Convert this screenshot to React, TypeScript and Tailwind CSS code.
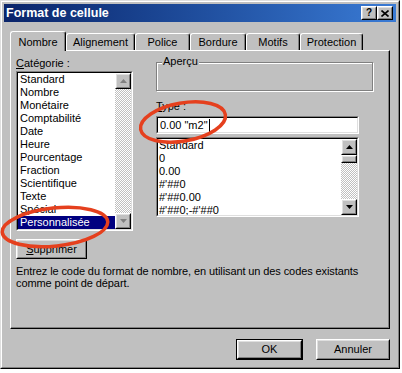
import type { ReactNode } from "react";

const FONT = { fontFamily: '"Liberation Sans", Arial, sans-serif' };

const CATEGORIES = [
  "Standard",
  "Nombre",
  "Monétaire",
  "Comptabilité",
  "Date",
  "Heure",
  "Pourcentage",
  "Fraction",
  "Scientifique",
  "Texte",
  "Spécial",
  "Personnalisée",
];

const TYPES = ["Standard", "0", "0.00", "#'##0", "#'##0.00", "#'##0;-#'##0"];

const TABS = [
  { label: "Nombre", w: "w-[56px]" },
  { label: "Alignement", w: "w-[69px]" },
  { label: "Police", w: "w-[55px]" },
  { label: "Bordure", w: "w-[56px]" },
  { label: "Motifs", w: "w-[54px]" },
  { label: "Protection", w: "w-[63px]" },
];

function Raised({ className = "", children }: { className?: string; children?: ReactNode }) {
  return (
    <div className={"border border-t-white border-l-white border-r-black border-b-black bg-[#c0c0c0] " + className}>
      <div className="flex h-full w-full items-center justify-center border border-t-[#dfdfdf] border-l-[#dfdfdf] border-r-[#808080] border-b-[#808080]">
        {children}
      </div>
    </div>
  );
}

function Sunken({ className = "", children }: { className?: string; children?: ReactNode }) {
  return (
    <div className={"border border-t-[#808080] border-l-[#808080] border-r-white border-b-white " + className}>
      <div className="flex h-full w-full overflow-hidden border border-t-black border-l-black border-r-[#dfdfdf] border-b-[#dfdfdf] bg-white">
        {children}
      </div>
    </div>
  );
}

function Arrow({ up, color }: { up?: boolean; color: string }) {
  return (
    <svg width="7" height="4" viewBox="0 0 7 4">
      {up ? <polygon points="3.5,0 7,4 0,4" fill={color} /> : <polygon points="0,0 7,0 3.5,4" fill={color} />}
    </svg>
  );
}

function ScrollBar({ disabled, thumb }: { disabled?: boolean; thumb?: boolean }) {
  const c = disabled ? "#808080" : "#000000";
  return (
    <div className="flex h-full w-[16px] shrink-0 flex-col">
      <Raised className="h-[16px] w-[16px] shrink-0">
        <Arrow up color={c} />
      </Raised>
      <div className="flex-1 bg-[repeating-conic-gradient(#c0c0c0_0%_25%,#ffffff_0%_50%)] bg-[length:2px_2px]">
        {thumb && <Raised className="h-[8px] w-[16px]" />}
      </div>
      <Raised className="h-[16px] w-[16px] shrink-0">
        <Arrow color={c} />
      </Raised>
    </div>
  );
}

export default function App() {
  return (
    <div className="relative h-[373px] w-[402px] overflow-hidden bg-white text-[11px] text-black" style={FONT}>
      {/* dialog window */}
      <div className="h-[369px] w-[400px] border border-t-[#dfdfdf] border-l-[#dfdfdf] border-r-black border-b-black bg-[#c0c0c0]">
        <div className="flex h-full flex-col border border-t-white border-l-white border-r-[#808080] border-b-[#808080] p-[2px]">
          {/* title bar */}
          <div className="flex h-[18px] shrink-0 items-center justify-between bg-gradient-to-r from-[#0a246a] to-[#3a7bd5] pl-[2px] pr-[3px]">
            <span className="text-[12.5px] font-bold text-white">Format de cellule</span>
            <div className="flex">
              <Raised className="h-[14px] w-[16px]">
                <span className="text-[10px] font-bold leading-none">?</span>
              </Raised>
              <Raised className="h-[14px] w-[16px]">
                <svg width="8" height="7" viewBox="0 0 8 7">
                  <path d="M0.5 0.5 L7.5 6.5 M7.5 0.5 L0.5 6.5" stroke="#000" strokeWidth="1.6" />
                </svg>
              </Raised>
            </div>
          </div>

          {/* tabs */}
          <div className="ml-[6px] mt-[8px] flex h-[20px] items-end">
            {TABS.map((t, i) =>
              i === 0 ? (
                <div
                  key={t.label}
                  className={"relative z-10 -mb-px flex h-[20px] items-center justify-center rounded-t-[3px] border-x border-t border-t-white border-l-white border-r-black bg-[#c0c0c0] pt-[1px] shadow-[inset_-1px_0_0_#808080] " + t.w}
                >
                  {t.label}
                </div>
              ) : (
                <div
                  key={t.label}
                  className={"flex h-[17px] items-center justify-center rounded-t-[3px] border-x border-t border-t-white border-l-white border-r-black pt-[1px] shadow-[inset_-1px_0_0_#808080] " + t.w}
                >
                  {t.label}
                </div>
              )
            )}
          </div>

          {/* tab panel */}
          <div className="ml-[6px] h-[279px] w-[380px] border border-t-white border-l-white border-r-black border-b-black shadow-[inset_-1px_-1px_0_#808080]">
            <div className="flex items-start">
              {/* left column */}
              <div className="ml-[5px] w-[117px]">
                <div className="mt-[5px] h-[14px] leading-[14px]">
                  <u>C</u>atégorie :
                </div>
                <Sunken className="mt-[1px] h-[160px] w-[117px]">
                  <div className="flex-1">
                    {CATEGORIES.map((c) => (
                      <div
                        key={c}
                        className={
                          "h-[13px] pl-[2px] leading-[13px] " +
                          (c === "Personnalisée" ? "bg-[#000080] text-white" : "")
                        }
                      >
                        {c}
                      </div>
                    ))}
                  </div>
                  <ScrollBar disabled />
                </Sunken>
                <Raised className="mt-[8px] h-[20px] w-[71px]">
                  <span>
                    <u>S</u>upprimer
                  </span>
                </Raised>
              </div>

              {/* right column */}
              <div className="ml-[23px] w-[217px]">
                <div className="relative mt-[11px] h-[29px] w-[217px] border border-[#808080] shadow-[inset_1px_1px_0_#fff,1px_1px_0_#fff]">
                  <span className="absolute left-[5px] top-[-8px] bg-[#c0c0c0] px-px leading-[13px]">Aperçu</span>
                </div>
                <div className="mt-[9px] h-[13px] leading-[13px]">
                  <u>T</u>ype :
                </div>
                <Sunken className="mt-[3px] h-[18px] w-[203px]">
                  <div className="flex items-center pl-[2px] leading-[14px]">
                    0.00 "m2"
                    <span className="ml-px inline-block h-[13px] w-px bg-black" />
                  </div>
                </Sunken>
                <Sunken className="mt-[3px] h-[80px] w-[203px]">
                  <div className="flex-1">
                    {TYPES.map((t) => (
                      <div key={t} className="h-[13px] pl-[1px] leading-[13px]">
                        {t}
                      </div>
                    ))}
                  </div>
                  <ScrollBar thumb />
                </Sunken>
              </div>
            </div>

            <p className="ml-[5px] mt-[6px] leading-[12px] tracking-[-0.1px]">
              Entrez le code du format de nombre, en utilisant un des codes existants
              <br />
              comme point de départ.
            </p>
          </div>

          {/* buttons */}
          <div className="ml-[6px] mt-[10px] flex w-[380px] justify-end gap-[13px]">
            <div className="border border-black">
              <Raised className="h-[19px] w-[65px]">OK</Raised>
            </div>
            <Raised className="h-[21px] w-[74px]">Annuler</Raised>
          </div>
        </div>
      </div>

      {/* red hand-drawn circles over the dialog */}
      <svg className="pointer-events-none absolute left-0 top-0" width="402" height="373" viewBox="0 0 402 373">
        <ellipse cx="183" cy="122" rx="43" ry="19" transform="rotate(-10 183 122)" fill="none" stroke="#e5401e" strokeWidth="3.5" />
        <ellipse cx="55" cy="227" rx="53" ry="19" transform="rotate(-6 55 227)" fill="none" stroke="#e5401e" strokeWidth="3.5" />
      </svg>
    </div>
  );
}
